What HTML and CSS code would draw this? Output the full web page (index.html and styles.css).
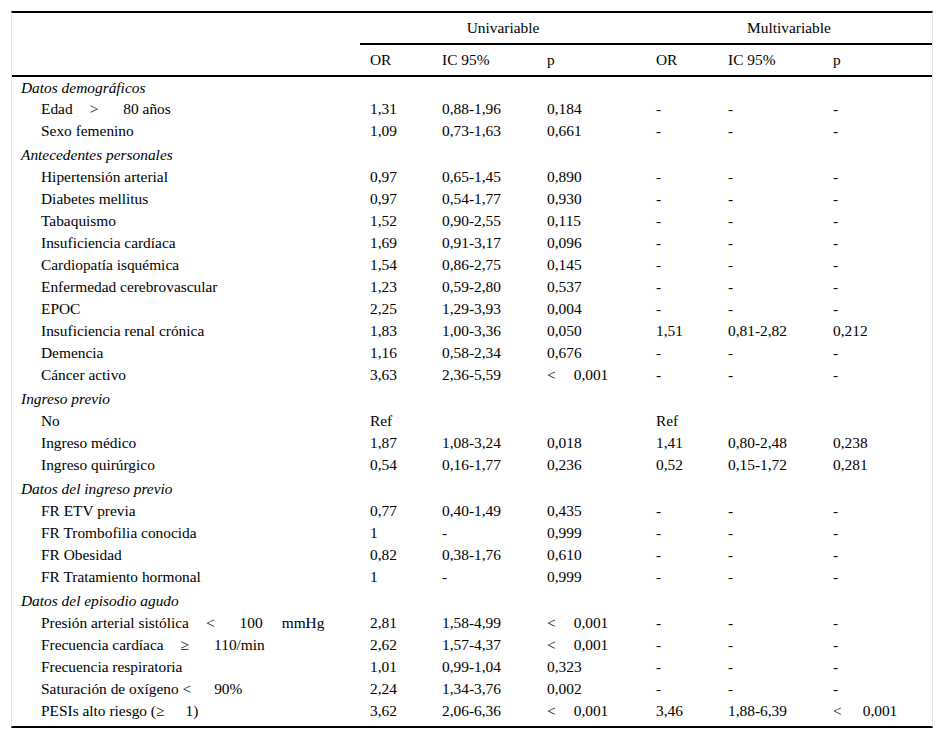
FILE: index.html
```html
<!DOCTYPE html>
<html lang="es">
<head>
<meta charset="utf-8">
<title>Tabla</title>
<link rel="stylesheet" href="styles.css">
</head>
<body>
<div class="frame">
<table class="stats">
<colgroup>
<col class="c-label"><col class="c-or"><col class="c-ic"><col class="c-p"><col class="c-or"><col class="c-ic"><col class="c-p">
</colgroup>
<thead>
<tr class="group"><th rowspan="2" class="blank"></th><th colspan="3">Univariable</th><th colspan="3">Multivariable</th></tr>
<tr class="sub"><th>OR</th><th>IC 95%</th><th>p</th><th>OR</th><th>IC 95%</th><th>p</th></tr>
</thead>
<tbody>
<tr class="cat first"><td colspan="7">Datos demográficos</td></tr>
<tr><td>Edad<span class="g1"></span>&gt;<span class="g2"></span>80 años</td><td>1,31</td><td>0,88-1,96</td><td>0,184</td><td>-</td><td>-</td><td>-</td></tr>
<tr><td>Sexo femenino</td><td>1,09</td><td>0,73-1,63</td><td>0,661</td><td>-</td><td>-</td><td>-</td></tr>
<tr class="cat"><td colspan="7">Antecedentes personales</td></tr>
<tr><td>Hipertensión arterial</td><td>0,97</td><td>0,65-1,45</td><td>0,890</td><td>-</td><td>-</td><td>-</td></tr>
<tr><td>Diabetes mellitus</td><td>0,97</td><td>0,54-1,77</td><td>0,930</td><td>-</td><td>-</td><td>-</td></tr>
<tr><td>Tabaquismo</td><td>1,52</td><td>0,90-2,55</td><td>0,115</td><td>-</td><td>-</td><td>-</td></tr>
<tr><td>Insuficiencia cardíaca</td><td>1,69</td><td>0,91-3,17</td><td>0,096</td><td>-</td><td>-</td><td>-</td></tr>
<tr><td>Cardiopatía isquémica</td><td>1,54</td><td>0,86-2,75</td><td>0,145</td><td>-</td><td>-</td><td>-</td></tr>
<tr><td>Enfermedad cerebrovascular</td><td>1,23</td><td>0,59-2,80</td><td>0,537</td><td>-</td><td>-</td><td>-</td></tr>
<tr><td>EPOC</td><td>2,25</td><td>1,29-3,93</td><td>0,004</td><td>-</td><td>-</td><td>-</td></tr>
<tr><td>Insuficiencia renal crónica</td><td>1,83</td><td>1,00-3,36</td><td>0,050</td><td>1,51</td><td>0,81-2,82</td><td>0,212</td></tr>
<tr><td>Demencia</td><td>1,16</td><td>0,58-2,34</td><td>0,676</td><td>-</td><td>-</td><td>-</td></tr>
<tr><td>Cáncer activo</td><td>3,63</td><td>2,36-5,59</td><td>&lt;<span class="g3"></span>0,001</td><td>-</td><td>-</td><td>-</td></tr>
<tr class="cat"><td colspan="7">Ingreso previo</td></tr>
<tr><td>No</td><td>Ref</td><td></td><td></td><td>Ref</td><td></td><td></td></tr>
<tr><td>Ingreso médico</td><td>1,87</td><td>1,08-3,24</td><td>0,018</td><td>1,41</td><td>0,80-2,48</td><td>0,238</td></tr>
<tr><td>Ingreso quirúrgico</td><td>0,54</td><td>0,16-1,77</td><td>0,236</td><td>0,52</td><td>0,15-1,72</td><td>0,281</td></tr>
<tr class="cat"><td colspan="7">Datos del ingreso previo</td></tr>
<tr><td>FR ETV previa</td><td>0,77</td><td>0,40-1,49</td><td>0,435</td><td>-</td><td>-</td><td>-</td></tr>
<tr><td>FR Trombofilia conocida</td><td>1</td><td>-</td><td>0,999</td><td>-</td><td>-</td><td>-</td></tr>
<tr><td>FR Obesidad</td><td>0,82</td><td>0,38-1,76</td><td>0,610</td><td>-</td><td>-</td><td>-</td></tr>
<tr><td>FR Tratamiento hormonal</td><td>1</td><td>-</td><td>0,999</td><td>-</td><td>-</td><td>-</td></tr>
<tr class="cat"><td colspan="7">Datos del episodio agudo</td></tr>
<tr><td>Presión arterial sistólica<span class="g1"></span>&lt;<span class="g2"></span>100<span class="g4"></span>mmHg</td><td>2,81</td><td>1,58-4,99</td><td>&lt;<span class="g3"></span>0,001</td><td>-</td><td>-</td><td>-</td></tr>
<tr><td>Frecuencia cardíaca<span class="g1"></span>≥<span class="g2"></span>110/min</td><td>2,62</td><td>1,57-4,37</td><td>&lt;<span class="g3"></span>0,001</td><td>-</td><td>-</td><td>-</td></tr>
<tr><td>Frecuencia respiratoria</td><td>1,01</td><td>0,99-1,04</td><td>0,323</td><td>-</td><td>-</td><td>-</td></tr>
<tr><td>Saturación de oxígeno &lt;<span class="g6"></span>90%</td><td>2,24</td><td>1,34-3,76</td><td>0,002</td><td>-</td><td>-</td><td>-</td></tr>
<tr><td>PESIs alto riesgo (≥<span class="g5"></span>1)</td><td>3,62</td><td>2,06-6,36</td><td>&lt;<span class="g3"></span>0,001</td><td>3,46</td><td>1,88-6,39</td><td>&lt;<span class="g3b"></span>0,001</td></tr>
</tbody>
</table>
</div>
</body>
</html>
```
FILE: styles.css
```css
html, body {
  margin: 0;
  padding: 0;
  background: #ffffff;
}

body {
  font-family: "Liberation Serif", "Times New Roman", serif;
  font-size: 15.4px;
  color: #000000;
}

.frame {
  margin: 11px 0 0 11px;
  width: 920px;
  border-top: 2px solid #000;
  border-bottom: 2px solid #000;
  border-left: 1px solid #e4e4e4;
  border-right: 1px solid #e4e4e4;
  padding-bottom: 4px;
}

.stats {
  width: 920px;
  border-collapse: separate;
  border-spacing: 0;
  table-layout: fixed;
}

.c-label { width: 348px; }
.c-or { width: 72px; }
.c-ic { width: 105px; }
.c-p { width: 109px; }

.stats th {
  font-weight: normal;
  text-align: left;
  padding: 0 0 0 10px;
  line-height: 30px;
  border-bottom: 2px solid #000;
  white-space: nowrap;
}

.stats .group th {
  text-align: center;
  padding: 0;
}

.stats td {
  padding: 0 0 0 10px;
  line-height: 22px;
  white-space: nowrap;
  vertical-align: middle;
}

.stats td:first-child {
  padding-left: 29px;
}

.stats tr.cat td {
  font-style: italic;
  padding-left: 9px;
  padding-top: 1px;
  line-height: 23px;
}

.stats tr.cat.first td {
  padding-top: 0;
  line-height: 21px;
}

.g1, .g2, .g3, .g3b, .g4, .g5, .g6 {
  display: inline-block;
}

.g1 { width: 17px; }
.g2 { width: 25px; }
.g3 { width: 18px; }
.g3b { width: 21px; }
.g4 { width: 19px; }
.g5 { width: 21px; }
.g6 { width: 23px; }
```
